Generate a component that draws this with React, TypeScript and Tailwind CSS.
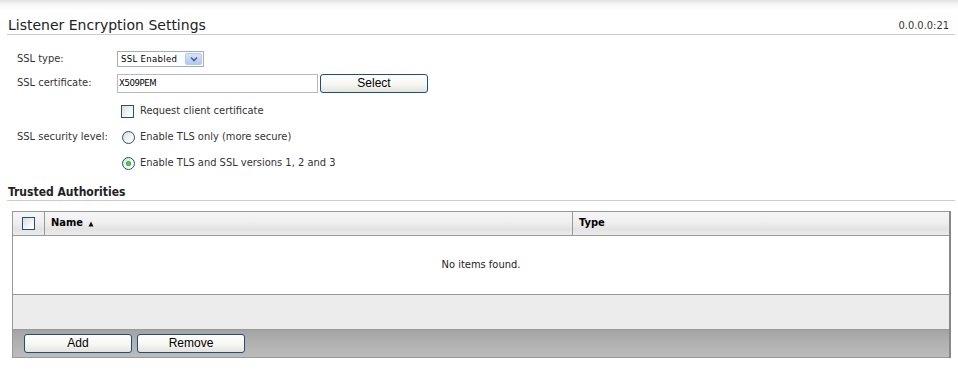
import React from "react";

const XpButton = ({ label, w }: { label: string; w: string }) => (
  <button
    className={`${w} h-[19px] rounded-[3px] border border-[#1c4f80] bg-[linear-gradient(to_bottom,#ffffff_0%,#f5f5f1_60%,#e4e3dc_100%)] text-[12px] leading-[17px] text-black font-['Liberation_Sans',sans-serif] flex items-center justify-center`}
  >
    {label}
  </button>
);

const Radio = ({ checked }: { checked?: boolean }) => (
  <span className="w-[13px] h-[13px] rounded-full border border-[#1c5180] bg-[linear-gradient(135deg,#dcdcd6_0%,#ffffff_80%)] flex items-center justify-center shrink-0">
    {checked && (
      <span className="w-[5px] h-[5px] rounded-full bg-[radial-gradient(circle,#5fdc5f_0%,#21a121_80%)]" />
    )}
  </span>
);

const Check = () => (
  <span className="w-[13px] h-[13px] border border-[#1c5180] bg-[linear-gradient(135deg,#dcdcd6_0%,#ffffff_85%)] shrink-0 block" />
);

export default function App() {
  return (
    <div className="w-[958px] h-[389px] bg-[linear-gradient(to_bottom,#e2e2e2_0px,#f4f4f4_4px,#ffffff_10px)] font-['DejaVu_Sans_Condensed','Liberation_Sans',sans-serif] text-[11px] text-[#333] overflow-hidden">
      {/* Title bar */}
      <div className="ml-[7px] mr-[3px] pt-[17px] h-[35px] border-b border-[#cccccc] flex items-start justify-between">
        <div className="pl-[1px] text-[14px] leading-[16px] text-[#222] font-['DejaVu_Sans',sans-serif]">
          Listener Encryption Settings
        </div>
        <div className="pr-[6px] pt-[2px] text-[11px] leading-[14px] text-[#333]">0.0.0.0:21</div>
      </div>

      {/* Form */}
      <div className="pl-[17px] pt-[12px] flex flex-col">
        <div className="h-[24px] flex items-center">
          <div className="w-[100px]">SSL type:</div>
          <div className="w-[87px] h-[16px] border border-[#a5acb5] bg-white flex items-center justify-between pl-[3px] pr-[1px]">
            <span className="text-[9.5px] text-black tracking-[0.3px]">SSL Enabled</span>
            <span className="w-[17px] h-[12px] rounded-[2px] border border-[#b4c8f3] bg-[linear-gradient(to_bottom,#d6e3fc_0%,#b2c8f2_100%)] flex items-center justify-center">
              <svg width="8" height="6" viewBox="0 0 8 6">
                <path d="M1 1.5 L4 4.5 L7 1.5" stroke="#4d6185" strokeWidth="1.6" fill="none" />
              </svg>
            </span>
          </div>
        </div>
        <div className="h-[24px] flex items-center">
          <div className="w-[100px]">SSL certificate:</div>
          <div className="w-[201px] h-[19px] border border-[#b9b9b9] bg-white flex items-center pl-[1px]">
            <span className="text-[9.5px] text-black tracking-[-0.4px]">X509PEM</span>
          </div>
          <div className="ml-[2px]">
            <XpButton label="Select" w="w-[108px]" />
          </div>
        </div>
        <div className="h-[32px] flex items-center">
          <div className="w-[104px]" />
          <Check />
          <span className="ml-[6px]">Request client certificate</span>
        </div>
        <div className="h-[21px] flex items-center">
          <div className="w-[105px]">SSL security level:</div>
          <Radio />
          <span className="ml-[5px]">Enable TLS only (more secure)</span>
        </div>
        <div className="h-[31px] flex items-center">
          <div className="w-[105px]" />
          <Radio checked />
          <span className="ml-[5px]">Enable TLS and SSL versions 1, 2 and 3</span>
        </div>
      </div>

      {/* Trusted Authorities */}
      <div className="ml-[7px] mr-[3px] mt-[5px] h-[17px] border-b border-[#cccccc] pl-[1px] text-[12px] font-bold text-[#222] leading-[16px]">
        Trusted Authorities
      </div>

      {/* Table */}
      <div className="ml-[12px] mt-[10px] w-[939px] border-l border-t border-[#999] border-r-2 border-r-[#888] flex flex-col">
        <div className="h-[24px] flex border-b border-[#999] bg-[linear-gradient(to_bottom,#f6f6f6_0%,#efefef_45%,#e3e3e3_75%,#ececec_100%)] text-[11px] font-bold text-black">
          <div className="w-[32px] border-r border-[#999] flex items-center justify-center">
            <span className="w-[13px] h-[13px] border border-[#1c5180] bg-[linear-gradient(135deg,#dcdcd6_0%,#ffffff_85%)] block" />
          </div>
          <div className="w-[528px] border-r border-[#999] flex items-center pl-[6px] gap-[5px]">
            <span>Name</span>
            <svg width="6" height="6" viewBox="0 0 6 6">
              <path d="M3 0.5 L5.5 5.5 L0.5 5.5 Z" fill="#111" />
            </svg>
          </div>
          <div className="flex-1 flex items-center pl-[6px]">Type</div>
        </div>
        <div className="h-[59px] bg-white border-b border-[#999] flex items-center justify-center text-[11px] text-[#222]">
          No items found.
        </div>
        <div className="h-[34px] bg-[#ececec]" />
        <div className="h-[29px] border-t border-[#999] border-b border-b-[#999] bg-[linear-gradient(to_bottom,#a3a3a3_0%,#adadad_30%,#bcbcbc_100%)] flex items-center gap-[5px] pl-[11px]">
          <XpButton label="Add" w="w-[108px]" />
          <XpButton label="Remove" w="w-[108px]" />
        </div>
      </div>
    </div>
  );
}
